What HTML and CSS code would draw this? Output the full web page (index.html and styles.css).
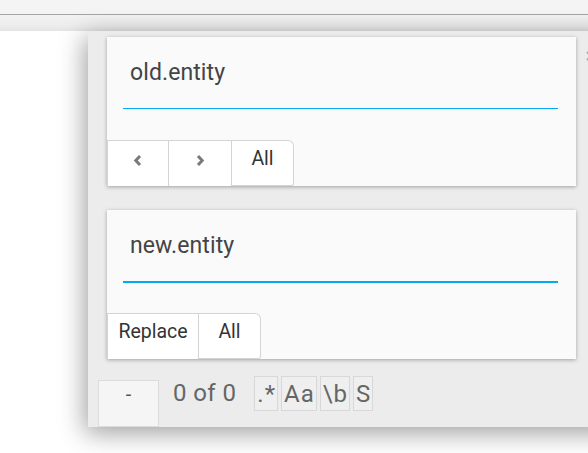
FILE: index.html
```html
<!DOCTYPE html>
<html>
<head>
<meta charset="utf-8">
<link rel="stylesheet" href="styles.css">
</head>
<body>
<div class="topbar"></div>
<div class="toolbar"></div>
<div class="content">
  <div class="panel">
    <svg class="close" width="10" height="10" viewBox="0 0 10 10"><path d="M1 1 L9 9 M9 1 L1 9" stroke="#aaa" stroke-width="2"/></svg>
    <div class="card">
      <div class="field"><span class="value">old.entity</span></div>
      <div class="btns">
        <div class="btn w62"><svg width="10" height="13" viewBox="0 0 10 13"><path d="M7 2 L2.8 6.5 L7 11" fill="none" stroke="#7a7a7a" stroke-width="3"/></svg></div>
        <div class="btn w63"><svg width="10" height="13" viewBox="0 0 10 13"><path d="M3 2 L7.2 6.5 L3 11" fill="none" stroke="#7a7a7a" stroke-width="3"/></svg></div>
        <div class="btn w61 last">All</div>
      </div>
    </div>
    <div class="card second">
      <div class="field focused"><span class="value">new.entity</span></div>
      <div class="btns">
        <div class="btn w92">Replace</div>
        <div class="btn w61 last">All</div>
      </div>
    </div>
    <div class="status">
      <div class="dash">-</div>
      <div class="count">0 of 0</div>
      <div class="toggles">
        <span class="tog">.*</span>
        <span class="tog">Aa</span>
        <span class="tog">\b</span>
        <span class="tog">S</span>
      </div>
    </div>
  </div>
</div>
</body>
</html>
```

FILE: styles.css
```css
html, body {
  margin: 0;
  padding: 0;
  background: #ffffff;
  overflow: hidden;
  width: 588px;
  height: 453px;
  font-family: Roboto, "Liberation Sans", sans-serif;
}
.topbar {
  height: 14px;
  background: #f4f4f4;
  border-bottom: 1px solid #a3a3a3;
}
.toolbar {
  height: 16px;
  background: linear-gradient(#f3f3f3, #ececec 70%, #e4e4e4);
}
.content {
  display: flex;
  padding-left: 88px;
}
.panel {
  position: relative;
  flex: none;
  width: 530px;
  height: 396px;
  box-sizing: border-box;
  background: #ececec;
  padding-top: 6px;
  box-shadow: -3px 6px 24px rgba(0,0,0,0.38);
}
.close {
  position: absolute;
  left: 498px;
  top: 20px;
}
.card {
  width: 469px;
  margin-left: 19px;
  background: #fafafa;
  box-shadow: 0 1px 4px rgba(0,0,0,0.32);
}
.card.second {
  margin-top: 24px;
}
.field {
  height: 71px;
  margin: 0 18px 0 16px;
  border-bottom: 1px solid #03a9f4;
  margin-bottom: 31px;
}
.field.focused {
  border-bottom: 2px solid #03a9f4;
  margin-bottom: 30px;
}
.value {
  display: block;
  padding: 23px 0 0 7px;
  font-size: 23px;
  letter-spacing: 0.1px;
  color: #444;
  line-height: 26px;
}
.btns {
  display: flex;
}
.btn {
  height: 46px;
  box-sizing: border-box;
  background: #fff;
  border: 1px solid #d4d4d4;
  border-left: none;
  border-bottom: none;
  display: flex;
  justify-content: center;
  align-items: flex-start;
  padding-top: 6px;
  font-size: 19.5px;
  line-height: 23px;
  color: #333;
}
.btn:first-child {
  border-left: 1px solid #d4d4d4;
}
.btn svg {
  margin-top: 7px;
}
.btn.last {
  border-top-right-radius: 6px;
  border-right: 1px solid #d4d4d4;
  border-bottom: 1px solid #d4d4d4;
  border-bottom-right-radius: 3px;
}
.w62 { width: 62px; }
.w63 { width: 63px; }
.w61 { width: 62px; }
.w92 { width: 92px; }
.status {
  display: flex;
  align-items: flex-start;
  margin-top: 17px;
  padding-left: 10px;
}
.dash {
  margin-top: 4px;
  width: 61px;
  height: 47px;
  box-sizing: border-box;
  background: #f5f5f5;
  border: 1px solid #dcdcdc;
  text-align: center;
  font-size: 20px;
  line-height: 22px;
  padding-top: 2px;
  color: #555;
}
.count {
  margin-left: 14px;
  font-size: 24px;
  letter-spacing: 0.4px;
  line-height: 35px;
  color: #666;
  margin-right: 18px;
}
.toggles {
  display: flex;
  gap: 3px;
}
.tog {
  display: block;
  height: 35px;
  box-sizing: border-box;
  border: 1px solid #d8d8d8;
  background: #efefef;
  padding: 0 1px 0 2px;
  font-size: 24px;
  letter-spacing: 1px;
  line-height: 34px;
  color: #666;
}
```
